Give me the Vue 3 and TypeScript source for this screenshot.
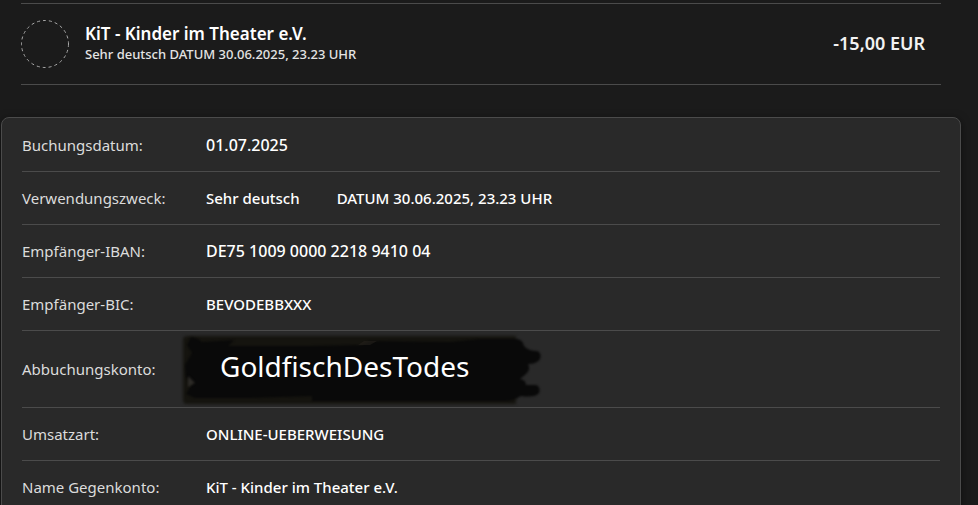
<script setup lang="ts">
interface DetailRow {
  label: string
  parts: string[]
  numeric?: boolean
  redacted?: boolean
}

const booking = {
  name: 'KiT - Kinder im Theater e.V.',
  purpose: 'Sehr deutsch DATUM 30.06.2025, 23.23 UHR',
  amount: '-15,00 EUR',
}

const rows: DetailRow[] = [
  { label: 'Buchungsdatum:', parts: ['01.07.2025'], numeric: true },
  { label: 'Verwendungszweck:', parts: ['Sehr deutsch', 'DATUM 30.06.2025, 23.23 UHR'] },
  { label: 'Empfänger-IBAN:', parts: ['DE75 1009 0000 2218 9410 04'], numeric: true },
  { label: 'Empfänger-BIC:', parts: ['BEVODEBBXXX'] },
  { label: 'Abbuchungskonto:', parts: ['GoldfischDesTodes'], redacted: true },
  { label: 'Umsatzart:', parts: ['ONLINE-UEBERWEISUNG'] },
  { label: 'Name Gegenkonto:', parts: ['KiT - Kinder im Theater e.V.'] },
]
</script>

<template>
  <main class="page">
    <header class="booking">
      <svg class="avatar" viewBox="0 0 48 48" aria-hidden="true">
        <circle cx="24" cy="24" r="23.5" fill="none" stroke="#a8a8a8" stroke-dasharray="3 3" />
      </svg>
      <div class="summary">
        <h1 class="name">{{ booking.name }}</h1>
        <p class="purpose">{{ booking.purpose }}</p>
      </div>
      <strong class="amount">{{ booking.amount }}</strong>
    </header>

    <dl class="card">
      <div v-for="row in rows" :key="row.label" class="row" :class="{ tall: row.redacted }">
        <dt class="label">{{ row.label }}</dt>
        <dd class="value" :class="{ numeric: row.numeric, redacted: row.redacted }">
          <svg v-if="row.redacted" class="scribble" viewBox="0 0 364 76" aria-hidden="true">
            <defs>
              <filter id="soft" x="-5%" y="-15%" width="110%" height="130%" color-interpolation-filters="sRGB">
                <feGaussianBlur stdDeviation="1.8" />
              </filter>
              <filter id="edge" x="-5%" y="-15%" width="110%" height="130%" color-interpolation-filters="sRGB">
                <feGaussianBlur stdDeviation="1.2" />
              </filter>
            </defs>
            <path filter="url(#soft)" fill="#15140f" d="M3 8Q3 5 8 5H336V73H6Q3 73 3 68Z" />
            <path
              filter="url(#edge)"
              fill="#090909"
              d="M11 6L18 8L22 11L54 9L48 15H130L182 14L190 10L270 11L300 8H337Q343 9 344 15Q348 20 357 20Q362 22 360 28Q357 33 348 33Q351 39 346 43L340 48Q346 49 346 54H356Q361 56 359 62Q355 67 341 65Q332 70 326 70H132V65L70 67L15 67L6 63L12 53L6 46L5 34L12 22L7 14Z"
            />
            <path filter="url(#edge)" fill="#2c2a26" d="M8 45L15 52L8 56Z" />
            <path fill="#24221c" opacity=".6" d="M178 14L184 10H197L190 14Z" />
          </svg>
          <span v-for="part in row.parts" :key="part" class="part">{{ part }}</span>
        </dd>
      </div>
    </dl>
  </main>
</template>

<style>
html,
body {
  background: #1b1b1b;
  overflow: hidden;
}
</style>

<style scoped>
.page {
  padding: 3px 17px 0 1px;
  color: #fff;
  font-family: "Noto Sans", "Open Sans", sans-serif;
  font-size: 15px;
  line-height: 20px;
}

.booking {
  display: flex;
  align-items: center;
  height: 80px;
  margin: 0 20px 32px;
  border-top: 1px solid #4b4b4b;
  border-bottom: 1px solid #4b4b4b;
}

.avatar {
  width: 48px;
  height: 48px;
}

.summary {
  flex: 1;
  margin-left: 16px;
  padding-bottom: 2px;
}

.name {
  margin: 0;
  font-size: 17px;
  font-weight: 600;
  line-height: 22px;
}

.purpose {
  margin: 0;
  color: #e4e4e4;
  font-size: 13px;
  font-weight: 500;
  line-height: 18px;
}

.amount {
  margin-right: 16px;
  padding-bottom: 2px;
  color: #f2f2f2;
  font-size: 18px;
  font-weight: 600;
}

.card {
  margin: 0;
  padding: 1px 20px 0;
  border: 1px solid #4b4b4b;
  border-radius: 8px;
  background: #292929;
  box-shadow: 0 2px 8px rgba(0, 0, 0, 0.5);
}

.row {
  display: flex;
  align-items: center;
  height: 52px;
  border-bottom: 1px solid #4b4b4b;
}

.tall {
  height: 76px;
}

.label {
  width: 184px;
  color: #dcdcdc;
}

.value {
  display: flex;
  gap: 37px;
  margin: 0;
  font-weight: 500;
}

.numeric {
  font-size: 16px;
}

.redacted {
  position: relative;
  padding: 0 0 6px 14px;
  font-size: 28px;
  font-weight: 400;
  line-height: 38px;
}

.scribble {
  position: absolute;
  top: -16px;
  left: -26px;
  width: 364px;
  height: 76px;
}

.part {
  position: relative;
}
</style>
